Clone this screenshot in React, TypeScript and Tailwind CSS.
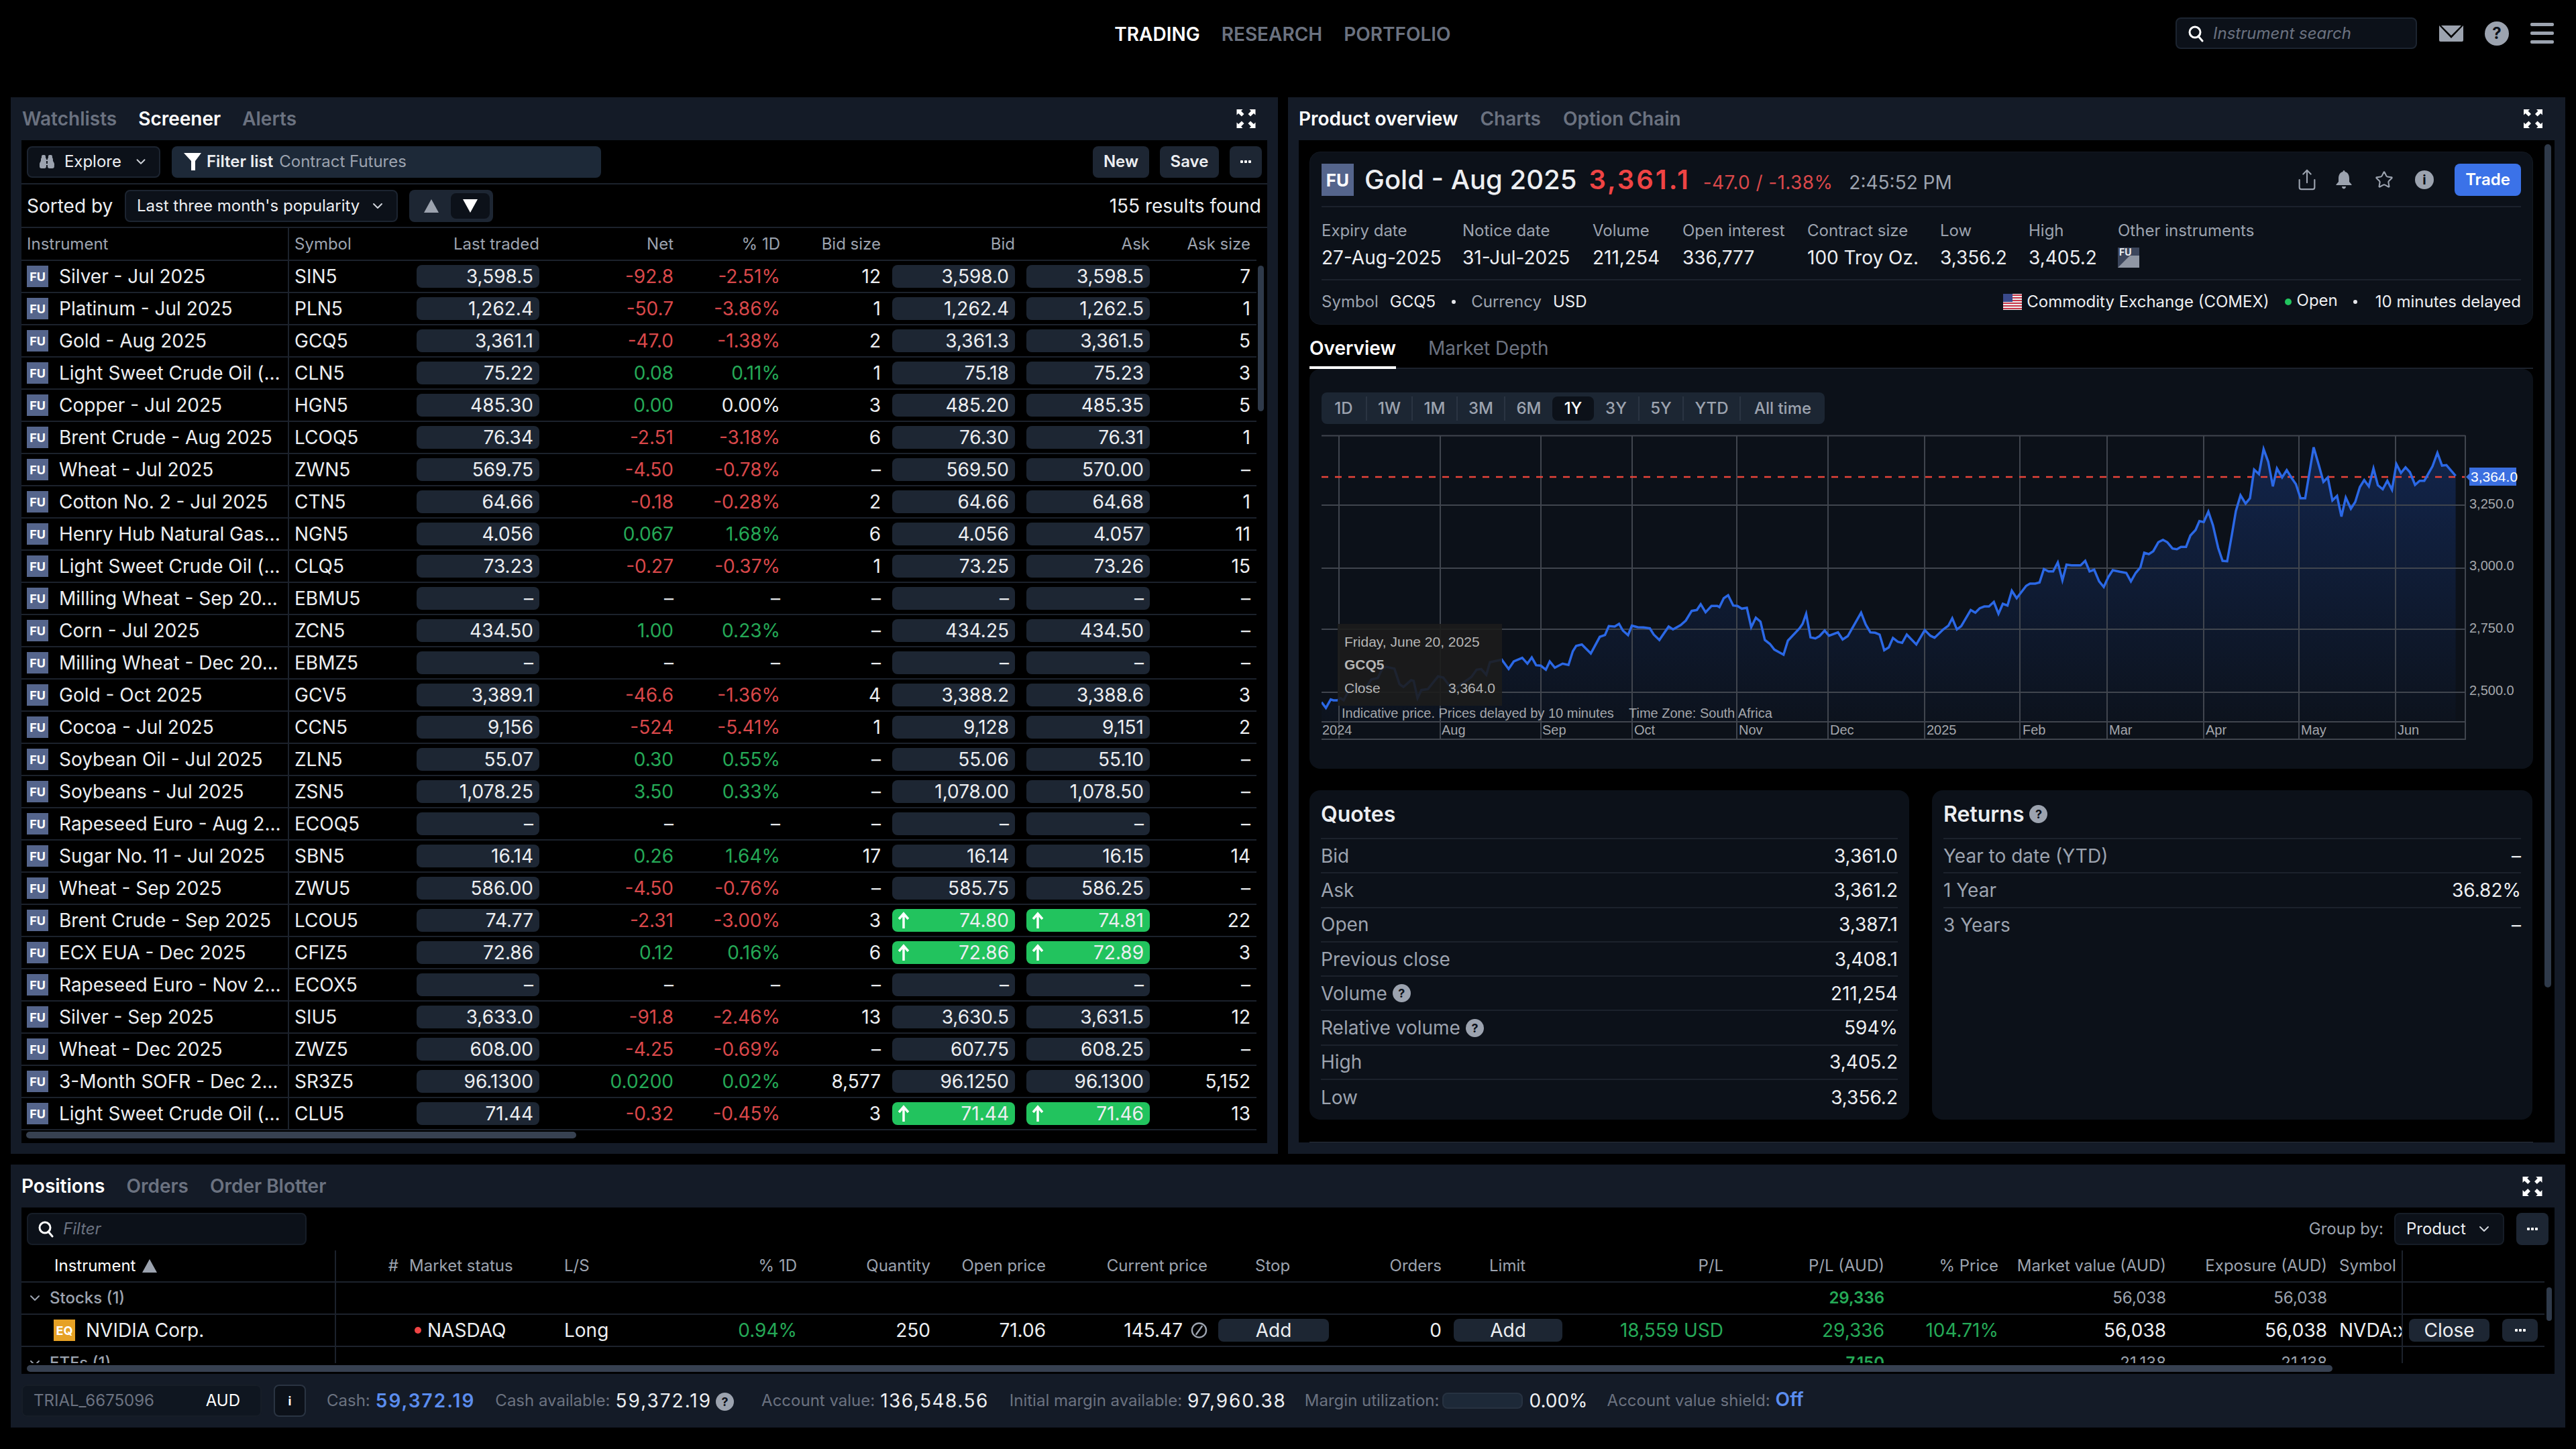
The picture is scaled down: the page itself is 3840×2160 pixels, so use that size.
import { Binoculars, ChevronDown, Share, Star } from "lucide-react";

type Row = [string, string, string, string, string, string, string, string, string, boolean?];

const rows: Row[] = [
  ["Silver - Jul 2025", "SIN5", "3,598.5", "-92.8", "-2.51%", "12", "3,598.0", "3,598.5", "7"],
  ["Platinum - Jul 2025", "PLN5", "1,262.4", "-50.7", "-3.86%", "1", "1,262.4", "1,262.5", "1"],
  ["Gold - Aug 2025", "GCQ5", "3,361.1", "-47.0", "-1.38%", "2", "3,361.3", "3,361.5", "5"],
  ["Light Sweet Crude Oil (...", "CLN5", "75.22", "0.08", "0.11%", "1", "75.18", "75.23", "3"],
  ["Copper - Jul 2025", "HGN5", "485.30", "0.00", "0.00%", "3", "485.20", "485.35", "5"],
  ["Brent Crude - Aug 2025", "LCOQ5", "76.34", "-2.51", "-3.18%", "6", "76.30", "76.31", "1"],
  ["Wheat - Jul 2025", "ZWN5", "569.75", "-4.50", "-0.78%", "–", "569.50", "570.00", "–"],
  ["Cotton No. 2 - Jul 2025", "CTN5", "64.66", "-0.18", "-0.28%", "2", "64.66", "64.68", "1"],
  ["Henry Hub Natural Gas...", "NGN5", "4.056", "0.067", "1.68%", "6", "4.056", "4.057", "11"],
  ["Light Sweet Crude Oil (...", "CLQ5", "73.23", "-0.27", "-0.37%", "1", "73.25", "73.26", "15"],
  ["Milling Wheat - Sep 20...", "EBMU5", "–", "–", "–", "–", "–", "–", "–"],
  ["Corn - Jul 2025", "ZCN5", "434.50", "1.00", "0.23%", "–", "434.25", "434.50", "–"],
  ["Milling Wheat - Dec 20...", "EBMZ5", "–", "–", "–", "–", "–", "–", "–"],
  ["Gold - Oct 2025", "GCV5", "3,389.1", "-46.6", "-1.36%", "4", "3,388.2", "3,388.6", "3"],
  ["Cocoa - Jul 2025", "CCN5", "9,156", "-524", "-5.41%", "1", "9,128", "9,151", "2"],
  ["Soybean Oil - Jul 2025", "ZLN5", "55.07", "0.30", "0.55%", "–", "55.06", "55.10", "–"],
  ["Soybeans - Jul 2025", "ZSN5", "1,078.25", "3.50", "0.33%", "–", "1,078.00", "1,078.50", "–"],
  ["Rapeseed Euro - Aug 2...", "ECOQ5", "–", "–", "–", "–", "–", "–", "–"],
  ["Sugar No. 11 - Jul 2025", "SBN5", "16.14", "0.26", "1.64%", "17", "16.14", "16.15", "14"],
  ["Wheat - Sep 2025", "ZWU5", "586.00", "-4.50", "-0.76%", "–", "585.75", "586.25", "–"],
  ["Brent Crude - Sep 2025", "LCOU5", "74.77", "-2.31", "-3.00%", "3", "74.80", "74.81", "22", true],
  ["ECX EUA - Dec 2025", "CFIZ5", "72.86", "0.12", "0.16%", "6", "72.86", "72.89", "3", true],
  ["Rapeseed Euro - Nov 2...", "ECOX5", "–", "–", "–", "–", "–", "–", "–"],
  ["Silver - Sep 2025", "SIU5", "3,633.0", "-91.8", "-2.46%", "13", "3,630.5", "3,631.5", "12"],
  ["Wheat - Dec 2025", "ZWZ5", "608.00", "-4.25", "-0.69%", "–", "607.75", "608.25", "–"],
  ["3-Month SOFR - Dec 2...", "SR3Z5", "96.1300", "0.0200", "0.02%", "8,577", "96.1250", "96.1300", "5,152"],
  ["Light Sweet Crude Oil (...", "CLU5", "71.44", "-0.32", "-0.45%", "3", "71.44", "71.46", "13", true],
];

const tone = (v: string) => {
  if (v === "–") return "text-[#e5e7eb]";
  return v.startsWith("-") ? "text-[#d9484a]" : "text-[#25a957]";
};

// chart line, read off the reference in three crops
const crop = (base: number, pts: number[][]) => pts.map(([x, y]) => [base + x / 2.613, 650 + y / 3]);
const line = [
  ...crop(1960, [[26,1190],[43,1216],[62,1178],[72,1182],[88,1182],[100,1172],[112,1182],[135,1130],[165,1118],[200,1125],[220,1088],[245,1082],[262,1042],[278,1032],[310,1040],[330,1110],[345,1122],[375,1092],[385,1095],[400,1172],[415,1136],[440,1132],[480,1075],[500,1080],[540,1140],[560,1118],[610,1078],[630,1045],[648,1042],[668,1068],[682,1012],[728,1000],[755,1042],[775,1008],[808,992],[828,1018],[845,990],[862,1025],[880,1027],[900,1045],[915,1008],[935,1036],[965,1018],[988,1024],[1005,962],[1018,938],[1040,932],[1075,972],[1110,898],[1130,890],[1145,850],[1168,852],[1185,840],[1200,870],[1220,890],[1235,848],[1258,855],[1280,856],[1305,860],[1320,888],[1342,912],[1378,852],[1395,865],[1425,845],[1445,825],[1468,782],[1488,778],[1503,752],[1522,788],[1545,760]]),
  ...crop(2560, [[0,760],[8,765],[25,725],[42,712],[62,758],[78,760],[95,772],[115,768],[132,855],[150,812],[168,830],[185,912],[205,930],[222,955],[258,978],[275,915],[320,860],[332,840],[346,795],[363,900],[382,905],[398,895],[418,870],[435,893],[470,878],[488,910],[508,895],[560,790],[578,843],[596,878],[615,880],[632,888],[650,958],[668,945],[684,903],[703,920],[720,925],[738,888],[775,932],[808,868],[830,893],[846,902],[880,865],[900,848],[915,815],[933,865],[950,850],[987,778],[1005,790],[1022,770],[1040,762],[1058,762],[1077,742],[1095,795],[1112,750],[1130,758],[1147,692],[1166,725],[1203,670],[1218,660],[1238,660],[1255,655],[1272,595],[1290,605],[1308,605],[1326,565],[1344,645],[1360,575],[1380,578],[1415,578],[1433,558],[1450,605],[1468,598],[1487,650],[1505,675],[1523,630],[1540,600]]),
  ...crop(3160, [[0,607],[25,612],[43,650],[62,612],[80,588],[95,522],[113,528],[130,515],[150,475],[168,464],[185,475],[205,503],[222,506],[238,496],[258,496],[275,445],[295,420],[310,380],[327,385],[345,338],[363,400],[383,500],[400,558],[418,560],[435,450],[452,335],[470,265],[490,302],[507,278],[523,150],[542,170],[560,58],[578,115],[596,225],[612,145],[632,185],[650,152],[668,185],[686,215],[704,278],[722,278],[755,50],[775,130],[793,205],[810,185],[828,288],[846,268],[863,360],[880,275],[900,325],[917,295],[935,228],[952,197],[970,225],[988,145],[1005,220],[1024,238],[1042,200],[1060,240],[1077,125],[1095,165],[1113,140],[1130,162],[1150,218],[1168,200],[1186,200],[1218,135],[1237,75],[1255,132],[1272,130],[1308,178]]),
];
const linePts = line.map(([x, y]) => `${x.toFixed(1)},${y.toFixed(1)}`).join(" ");
const areaPts = `1970,1076 ${linePts} 3660.6,1076`;

const vLines = [1996, 2147, 2297, 2433, 2589, 2725, 2869, 3011, 3141, 3285, 3427, 3571];
const hLines = [753, 847, 938, 1032];
const months: [string, number][] = [["2024", 1971], ["Aug", 2149], ["Sep", 2299], ["Oct", 2436], ["Nov", 2592], ["Dec", 2728], ["2025", 2872], ["Feb", 3015], ["Mar", 3144], ["Apr", 3288], ["May", 3430], ["Jun", 3574]];
const prices: [string, number][] = [["3,250.0", 758], ["3,000.0", 850], ["2,750.0", 943], ["2,500.0", 1036]];

const ranges = [
  ["1D", "w-[68px]"], ["1W", "w-[68px]"], ["1M", "w-[67px]"], ["3M", "w-[71px]"], ["6M", "w-[70px]"],
  ["1Y", "w-[62px]"], ["3Y", "w-[68px]"], ["5Y", "w-[66px]"], ["YTD", "w-[85px]"], ["All time", "w-[125px]"],
];

const stats = [
  ["Expiry date", "27-Aug-2025", "w-[210px]"],
  ["Notice date", "31-Jul-2025", "w-[194px]"],
  ["Volume", "211,254", "w-[134px]"],
  ["Open interest", "336,777", "w-[186px]"],
  ["Contract size", "100 Troy Oz.", "w-[198px]"],
  ["Low", "3,356.2", "w-[132px]"],
  ["High", "3,405.2", "w-[133px]"],
];

const quotes: [string, string, boolean?][] = [
  ["Bid", "3,361.0"], ["Ask", "3,361.2"], ["Open", "3,387.1"], ["Previous close", "3,408.1"],
  ["Volume", "211,254", true], ["Relative volume", "594%", true], ["High", "3,405.2"], ["Low", "3,356.2"],
];

function Expand({ className }: { className: string }) {
  return (
    <svg viewBox="0 0 28 28" className={className} fill="#fff">
      <path d="M0 0h9L6.6 2.4 11 7l-3.6 3.6L2.6 6 0 8.6zM28 0h-9l2.4 2.4L17 7l3.6 3.6L25.4 6 28 8.6zM0 28h9l-2.4-2.4L11 21l-3.6-3.6L2.6 22 0 19.4zM28 28h-9l2.4-2.4L17 21l3.6-3.6L25.4 22 28 19.4z" />
    </svg>
  );
}

function SearchGlyph({ className }: { className: string }) {
  return (
    <svg viewBox="0 0 24 24" className={className} fill="none" stroke="#fff" strokeWidth="3">
      <circle cx="11" cy="10" r="8" />
      <path d="M16 16l6 7" strokeLinecap="round" />
    </svg>
  );
}

function Dots() {
  return (
    <svg viewBox="0 0 16 4" className="w-[16px] h-[4px]" fill="#fff">
      <rect width="4" height="4" rx="1" /><rect x="6" width="4" height="4" rx="1" /><rect x="12" width="4" height="4" rx="1" />
    </svg>
  );
}

function Help({ big }: { big?: boolean }) {
  return (
    <span className={`inline-flex items-center justify-center rounded-full bg-[#9ca3af] text-[#0c1119] font-bold shrink-0 ${big ? "w-[36px] h-[36px] text-[24px]" : "w-[27px] h-[27px] text-[18px]"}`}>?</span>
  );
}

function Badge({ kind }: { kind: "FU" | "EQ" }) {
  return (
    <span className={`w-[32px] h-[32px] shrink-0 flex items-center justify-center text-[18px] font-bold text-white ${kind === "FU" ? "bg-[#55658c]" : "bg-[#e6a125]"}`}>{kind}</span>
  );
}

function Pill({ value, up }: { value: string; up?: boolean }) {
  return (
    <div className={`h-[34px] w-full rounded-[8px] flex items-center justify-between pl-[8px] pr-[9px] ${up ? "bg-[#22c35e]" : "bg-[#1d2633]"}`}>
      {up ? (
        <svg viewBox="0 0 18 26" className="w-[18px] h-[26px]" fill="none" stroke="#fff" strokeWidth="3.5">
          <path d="M9 25V3M2 11l7-8 7 8" />
        </svg>
      ) : <span />}
      <span>{value}</span>
    </div>
  );
}

function Screener() {
  return (
    <div className="w-[1889px] bg-[#141b27] flex flex-col">
      <div className="h-[64px] shrink-0 flex items-center justify-between pl-[17px] pr-[33px] text-[28px] font-semibold text-[#6b7280]">
        <div className="flex gap-[32px]">
          <span>Watchlists</span>
          <span className="text-white">Screener</span>
          <span>Alerts</span>
        </div>
        <Expand className="w-[29px] h-[28px]" />
      </div>
      <div className="relative flex-1 mx-[16px] mb-[16px] bg-black flex flex-col min-h-0">
        <div className="h-[66px] shrink-0 px-[8px] border-b-2 border-[#1c222c] flex items-center justify-between text-[24px]">
          <div className="flex gap-[17px]">
            <div className="w-[199px] h-[47px] rounded-[8px] bg-[#0c1119] border-2 border-[#1c2430] flex items-center px-[16px] gap-[14px]">
              <Binoculars className="w-[26px] h-[26px] text-[#9ca3af]" fill="currentColor" />
              <span>Explore</span>
              <ChevronDown className="w-[24px] h-[24px] ml-[4px] text-[#d1d5db]" />
            </div>
            <div className="w-[640px] h-[47px] rounded-[8px] bg-[#1d2938] flex items-center px-[18px]">
              <svg viewBox="0 0 26 28" className="w-[26px] h-[28px]" fill="#fff"><path d="M0 1h26L17 13v14l-6 0V13z" /></svg>
              <span className="font-semibold ml-[8px]">Filter list</span>
              <span className="ml-[9px] text-[#9ca3af]">Contract Futures</span>
            </div>
          </div>
          <div className="flex gap-[16px] font-semibold">
            <div className="w-[84px] h-[47px] rounded-[8px] bg-[#1d2633] flex items-center justify-center">New</div>
            <div className="w-[88px] h-[47px] rounded-[8px] bg-[#1d2633] flex items-center justify-center">Save</div>
            <div className="w-[48px] h-[47px] rounded-[8px] bg-[#1d2633] flex items-center justify-center"><Dots /></div>
          </div>
        </div>
        <div className="h-[65px] shrink-0 px-[8px] border-b-2 border-[#1c222c] flex items-center text-[28px]">
          <span className="w-[146px]">Sorted by</span>
          <div className="w-[407px] h-[48px] rounded-[8px] bg-[#0c1119] border-2 border-[#1c2430] flex items-center justify-between px-[16px] text-[24px]">
            <span>Last three month's popularity</span>
            <ChevronDown className="w-[24px] h-[24px] text-[#d1d5db]" />
          </div>
          <div className="ml-[17px] w-[125px] h-[48px] rounded-[8px] bg-[#1d2633] flex items-center justify-between pl-[22px] pr-[5px]">
            <svg viewBox="0 0 22 20" className="w-[22px] h-[20px]" fill="#9ca3af"><path d="M11 0l11 20H0z" /></svg>
            <span className="w-[58px] h-[38px] rounded-[8px] bg-[#0c1119] flex items-center justify-center">
              <svg viewBox="0 0 22 20" className="w-[22px] h-[20px]" fill="#fff"><path d="M11 20L22 0H0z" /></svg>
            </span>
          </div>
          <span className="ml-auto pr-[1px]">155 results found</span>
        </div>
        <div className="flex-1 min-h-0 overflow-hidden text-[28px] pr-[16px]">
          <div className="h-[49px] grid grid-cols-[399px_190px_183px_200px_159px_150px_200px_201px_158px] items-center border-b-2 border-[#1c222c] text-[24px] text-[#9ca3af] text-right">
            <div className="h-full flex items-center pl-[8px] border-r-2 border-[#1c222c]">Instrument</div>
            <div className="pl-[8px] text-left">Symbol</div>
            <div>Last traded</div>
            <div>Net</div>
            <div>% 1D</div>
            <div>Bid size</div>
            <div>Bid</div>
            <div>Ask</div>
            <div className="pr-[8px]">Ask size</div>
          </div>
          {rows.map((r) => (
            <div key={r[1]} className="h-[48px] grid grid-cols-[399px_190px_183px_200px_159px_150px_200px_201px_158px] items-center border-b-2 border-[#1c222c] text-right text-[#eceef1]">
              <div className="h-full flex items-center gap-[16px] pl-[8px] border-r-2 border-[#1c222c] whitespace-nowrap">
                <Badge kind="FU" />
                <span>{r[0]}</span>
              </div>
              <div className="pl-[8px] text-left">{r[1]}</div>
              <Pill value={r[2]} />
              <div className={tone(r[3])}>{r[3]}</div>
              <div className={r[4] === "0.00%" ? "" : tone(r[4])}>{r[4]}</div>
              <div>{r[5]}</div>
              <div className="pl-[17px]"><Pill value={r[6]} up={r[9]} /></div>
              <div className="pl-[17px]"><Pill value={r[7]} up={r[9]} /></div>
              <div className="pr-[8px]">{r[8]}</div>
            </div>
          ))}
        </div>
        <div className="h-[17px] shrink-0 pl-[7px]">
          <div className="w-[820px] h-[10px] rounded-full bg-[#374151]" />
        </div>
        <div className="absolute left-[1843px] top-[187px] w-[9px] h-[217px] rounded-full bg-[#2f3a4a]" />
      </div>
    </div>
  );
}

function Chart() {
  return (
    <div className="relative mt-[16px] w-[1790px] h-[456px]">
      <svg viewBox="1970 648 1790 456" className="w-[1790px] h-[456px]">
        <defs>
          <linearGradient id="area" gradientUnits="userSpaceOnUse" x1="0" y1="660" x2="0" y2="1076">
            <stop offset="0" stopColor="#2563eb" stopOpacity="0.24" />
            <stop offset="1" stopColor="#2563eb" stopOpacity="0.02" />
          </linearGradient>
        </defs>
        <polygon points={areaPts} fill="url(#area)" />
        <g stroke="#40454e" strokeWidth="2">
          <path d="M1970 649.5H3675M1970 1076H3675M1970 1102H3675M3675 649V1103" fill="none" />
          {hLines.map((y) => <path key={y} d={`M1970 ${y}H3675`} />)}
          {vLines.map((x) => <path key={x} d={`M${x} 649V1102`} />)}
        </g>
        <path d="M1970 711H3674" stroke="#e8443a" strokeWidth="2.5" strokeDasharray="10 10" />
        <polyline points={linePts} fill="none" stroke="#2b68e6" strokeWidth="3.5" />
        <g fontSize="20" fill="#a3a6ab" fontFamily="'Liberation Sans', sans-serif">
          {months.map(([t, x]) => <text key={t} x={x} y="1095">{t}</text>)}
          {prices.map(([t, y]) => <text key={t} x="3681" y={y}>{t}</text>)}
          <text x="2000" y="1070">Indicative price. Prices delayed by 10 minutes</text>
          <text x="2428" y="1070">Time Zone: South Africa</text>
        </g>
        <path d="M3676 711l6-6v12z" fill="#3b6fe0" />
        <rect x="3681" y="697" width="70" height="27" fill="#3b6fe0" />
        <text x="3683" y="718" fontSize="21" fill="#fff" fontFamily="'Liberation Sans', sans-serif">3,364.0</text>
      </svg>
      <div className="absolute left-[24px] top-[282px] w-[245px] h-[122px] bg-[#1c1c1c]/90 px-[10px] text-[21px] text-[#b5b5b5] font-['Liberation_Sans',sans-serif] flex flex-col justify-between py-[11px]">
        <div>Friday, June 20, 2025</div>
        <div className="font-bold">GCQ5</div>
        <div className="flex justify-between"><span>Close</span><span>3,364.0</span></div>
      </div>
    </div>
  );
}

function Overview() {
  return (
    <div className="w-[1904px] bg-[#141b27] flex flex-col">
      <div className="h-[64px] shrink-0 flex items-center justify-between pl-[16px] pr-[34px] text-[28px] font-semibold text-[#6b7280]">
        <div className="flex gap-[33px]">
          <span className="text-white">Product overview</span>
          <span>Charts</span>
          <span>Option Chain</span>
        </div>
        <Expand className="w-[28px] h-[28px]" />
      </div>
      <div className="relative flex-1 mx-[16px] mb-[17px] bg-black pl-[16px] pr-[32px] pt-[17px] min-h-0 overflow-hidden">
        <div className="h-[258px] rounded-[16px] bg-[#0c1119] px-[17px] pt-[17px] border border-[#131922]">
          <div className="h-[65px] flex items-start border-b-2 border-[#1c222c]">
            <span className="w-[48px] h-[48px] bg-[#55658c] flex items-center justify-center text-[26px] font-bold text-white shrink-0">FU</span>
            <span className="ml-[16px] text-[40px] leading-[48px] font-medium">Gold - Aug 2025</span>
            <span className="ml-[18px] text-[40px] leading-[48px] font-semibold tracking-[3px] text-[#ef4444]">3,361.1</span>
            <span className="ml-[19px] mt-[4px] text-[28px] leading-[48px] tracking-[0.4px] text-[#d9484a]">-47.0 / -1.38%</span>
            <span className="ml-[24px] mt-[4px] text-[28px] leading-[48px] text-[#9ca3af]">2:45:52 PM</span>
            <div className="ml-auto flex items-center h-[48px]">
              <Share className="w-[34px] h-[34px] text-[#9ca3af]" strokeWidth={1.5} />
              <svg viewBox="0 0 24 28" className="ml-[26px] w-[24px] h-[28px]" fill="#9ca3af"><path d="M12 0c1 0 1.500.8 1.500 2C18 3 20 7 20 12v5l3.500 4v1H.500v-1L4 17v-5c0-5 2-9 6.500-10C10.500.8 11 0 12 0zM9 24h6c0 2-1.500 3.500-3 3.500S9 26 9 24z" /></svg>
              <Star className="ml-[34px] w-[28px] h-[28px] text-[#9ca3af]" strokeWidth={1.8} />
              <span className="ml-[32px] w-[28px] h-[28px] rounded-full bg-[#9ca3af] text-[#0c1119] flex items-center justify-center text-[20px] font-bold">i</span>
              <span className="ml-[31px] w-[99px] h-[48px] rounded-[8px] bg-[#3b72e8] flex items-center justify-center text-[24px] font-semibold text-white">Trade</span>
            </div>
          </div>
          <div className="h-[109px] flex pt-[19px] border-b-2 border-[#1c222c]">
            {stats.map(([l, v, w]) => (
              <div key={l} className={w}>
                <div className="text-[24px] leading-[32px] text-[#9ca3af]">{l}</div>
                <div className="mt-[7px] text-[28px] leading-[34px]">{v}</div>
              </div>
            ))}
            <div>
              <div className="text-[24px] leading-[32px] text-[#9ca3af]">Other instruments</div>
              <div className="mt-[9px] w-[32px] h-[30px] bg-[#3c465c] relative overflow-hidden text-[14px] font-bold leading-[14px] pl-[2px]">
                FU
                <svg viewBox="0 0 32 30" className="absolute inset-0" fill="#8f96a3"><path d="M0 30L18 12h14v18z" /></svg>
              </div>
            </div>
          </div>
          <div className="h-[64px] flex items-center text-[24px]">
            <span className="text-[#9ca3af]">Symbol</span>
            <span className="ml-[17px]">GCQ5</span>
            <span className="ml-[24px] w-[6px] h-[6px] rounded-full bg-[#e5e7eb]" />
            <span className="ml-[23px] text-[#9ca3af]">Currency</span>
            <span className="ml-[17px]">USD</span>
            <svg viewBox="0 0 28 24" className="ml-auto w-[28px] h-[24px]">
              <rect width="28" height="24" fill="#eee" />
              <path d="M0 2h28M0 6h28M0 10h28M0 14h28M0 18h28M0 22h28" stroke="#c8374a" strokeWidth="2" />
              <rect width="14" height="12" fill="#3a4a8c" />
            </svg>
            <span className="ml-[7px]">Commodity Exchange (COMEX)</span>
            <span className="ml-[23px] w-[10px] h-[10px] rounded-full bg-[#22c55e]" />
            <span className="ml-[8px] -mt-[4px]">Open</span>
            <span className="ml-[23px] w-[6px] h-[6px] rounded-full bg-[#e5e7eb]" />
            <span className="ml-[27px]">10 minutes delayed</span>
          </div>
        </div>
        <div className="h-[66px] flex gap-[48px] items-start pt-[14px] text-[28px] border-b-2 border-[#1c222c] text-[#6b7280]">
          <span className="h-[52px] font-semibold text-white border-b-4 border-white">Overview</span>
          <span>Market Depth</span>
        </div>
        <div className="h-[596px] rounded-[16px] bg-[#0c1119] px-[18px] pt-[35px]">
          <div className="w-[750px] h-[47px] rounded-[8px] bg-[#1c2633] flex items-center text-[24px] font-medium text-[#9ca3af]">
            {ranges.map(([t, w], i) => (
              <span key={t} className={`${w} h-[36px] flex items-center justify-center ${t === "1Y" ? "bg-[#0c1119] rounded-[8px] text-white" : i < 9 && t !== "6M" ? "border-r-2 border-[#2a3442]" : ""}`}>{t}</span>
            ))}
          </div>
          <Chart />
        </div>
        <div className="mt-[32px] flex gap-[34px]">
          <div className="w-[894px] h-[491px] rounded-[16px] bg-[#0c1119] px-[17px]">
            <div className="h-[73px] flex items-center text-[32px] font-semibold border-b-2 border-[#1c222c]">Quotes</div>
            {quotes.map(([l, v, h], i) => (
              <div key={l} className={`h-[51.3px] flex items-center justify-between text-[28px] ${i < 7 ? "border-b-2 border-[#1c222c]" : ""}`}>
                <span className="flex items-center gap-[8px] text-[#9ca3af]">{l}{h && <Help />}</span>
                <span>{v}</span>
              </div>
            ))}
          </div>
          <div className="w-[895px] h-[491px] rounded-[16px] bg-[#0c1119] px-[17px]">
            <div className="h-[73px] flex items-center gap-[8px] text-[32px] font-semibold border-b-2 border-[#1c222c]">Returns <Help /></div>
            {[["Year to date (YTD)", "–"], ["1 Year", "36.82%"], ["3 Years", "–"]].map(([l, v], i) => (
              <div key={l} className={`h-[51.3px] flex items-center justify-between text-[28px] ${i < 2 ? "border-b-2 border-[#1c222c]" : ""}`}>
                <span className="text-[#9ca3af]">{l}</span>
                <span>{v}</span>
              </div>
            ))}
          </div>
        </div>
        <div className="mt-[33px] h-[2px] bg-[#2a303a]" />
        <div className="absolute left-[1857px] top-[6px] w-[10px] h-[1257px] rounded-full bg-[#2f3a4a]" />
      </div>
    </div>
  );
}

const posCols = "grid-cols-[469px_101px_231px_167px_188px_199px_172px_241px_181px_168px_180px_240px_240px_170px_250px_240px_111px_213px]";

function Positions() {
  return (
    <div className="mt-[16px] ml-[16px] w-[3808px] h-[392px] bg-[#141b27] flex flex-col">
      <div className="h-[64px] shrink-0 flex items-center justify-between pl-[16px] pr-[34px] text-[28px] font-semibold text-[#6b7280]">
        <div className="flex gap-[32px]">
          <span className="text-white">Positions</span>
          <span>Orders</span>
          <span>Order Blotter</span>
        </div>
        <Expand className="w-[30px] h-[29px]" />
      </div>
      <div className="relative mx-[16px] h-[248px] bg-black flex flex-col">
        <div className="h-[64px] shrink-0 flex items-center justify-between pl-[8px] pr-[9px] text-[24px]">
          <div className="w-[417px] h-[48px] rounded-[8px] bg-[#0c1119] border-2 border-[#161d27] flex items-center px-[14px] gap-[14px]">
            <SearchGlyph className="w-[24px] h-[26px]" />
            <span className="italic text-[#6b7280]">Filter</span>
          </div>
          <div className="flex items-center">
            <span className="text-[#9ca3af]">Group by:</span>
            <div className="ml-[16px] w-[164px] h-[48px] rounded-[8px] bg-[#0c1119] border-2 border-[#161d27] flex items-center justify-between px-[16px]">
              <span>Product</span>
              <ChevronDown className="w-[24px] h-[24px] text-[#d1d5db]" />
            </div>
            <div className="ml-[18px] w-[48px] h-[48px] rounded-[8px] bg-[#1d2633] flex items-center justify-center"><Dots /></div>
          </div>
        </div>
        <div className="h-[168px] overflow-hidden w-[3761px]">
          <div className={`h-[48px] grid ${posCols} items-center border-b-2 border-[#1c222c] text-[24px] text-[#9ca3af] text-right`}>
            <div className="h-full flex items-center gap-[10px] pl-[49px] text-white border-r-2 border-[#1c222c]">
              Instrument
              <svg viewBox="0 0 22 20" className="w-[22px] h-[20px]" fill="#9ca3af"><path d="M11 0l11 20H0z" /></svg>
            </div>
            <div className="pr-[8px]">#</div>
            <div className="pl-[8px] text-left">Market status</div>
            <div className="pl-[8px] text-left">L/S</div>
            <div>% 1D</div>
            <div>Quantity</div>
            <div>Open price</div>
            <div>Current price</div>
            <div className="pl-[71px] text-left">Stop</div>
            <div>Orders</div>
            <div className="pl-[71px] text-left">Limit</div>
            <div>P/L</div>
            <div>P/L (AUD)</div>
            <div>% Price</div>
            <div>Market value (AUD)</div>
            <div>Exposure (AUD)</div>
            <div className="pl-[18px] text-left">Symbol</div>
            <div className="h-full border-l-2 border-[#1c222c]" />
          </div>
          <div className={`h-[48px] grid ${posCols} items-center border-b-2 border-[#1c222c] text-[24px] text-right`}>
            <div className="h-full flex items-center gap-[10px] pl-[8px] text-[#9ca3af] border-r-2 border-[#1c222c]">
              <ChevronDown className="w-[24px] h-[24px]" />
              <span className="font-medium">Stocks (1)</span>
            </div>
            <div className="col-start-2 col-end-13" />
            <div className="font-semibold text-[#25a957]">29,336</div>
            <div />
            <div className="text-[#9ca3af]">56,038</div>
            <div className="text-[#9ca3af]">56,038</div>
            <div />
            <div className="h-full border-l-2 border-[#1c222c]" />
          </div>
          <div className={`h-[48px] grid ${posCols} items-center border-b-2 border-[#1c222c] text-[28px] text-right text-[#eceef1]`}>
            <div className="h-full flex items-center gap-[16px] pl-[48px] border-r-2 border-[#1c222c]">
              <Badge kind="EQ" />
              <span>NVIDIA Corp.</span>
            </div>
            <div />
            <div className="pl-[16px] flex items-center gap-[9px]"><span className="w-[10px] h-[10px] rounded-full bg-[#ef4444]" />NASDAQ</div>
            <div className="pl-[8px] text-left">Long</div>
            <div className="text-[#25a957]">0.94%</div>
            <div>250</div>
            <div>71.06</div>
            <div className="flex items-center justify-end gap-[12px]">
              145.47
              <svg viewBox="0 0 26 26" className="w-[25px] h-[26px]" fill="none" stroke="#9ca3af" strokeWidth="2.5"><circle cx="13" cy="13" r="11" /><path d="M18 6L8 20" /></svg>
            </div>
            <div className="pl-[16px]"><div className="h-[34px] rounded-[8px] bg-[#1d2633] flex items-center justify-center">Add</div></div>
            <div>0</div>
            <div className="pl-[18px]"><div className="h-[34px] rounded-[8px] bg-[#1d2633] flex items-center justify-center">Add</div></div>
            <div className="text-[#25a957]">18,559 USD</div>
            <div className="text-[#25a957]">29,336</div>
            <div className="text-[#25a957]">104.71%</div>
            <div>56,038</div>
            <div>56,038</div>
            <div className="pl-[18px] text-left overflow-hidden whitespace-nowrap">NVDA:xnas</div>
            <div className="h-full border-l-2 border-[#1c222c] flex items-center pl-[9px]">
              <div className="w-[120px] h-[34px] rounded-[8px] bg-[#1d2633] flex items-center justify-center">Close</div>
              <div className="ml-[19px] w-[53px] h-[34px] rounded-[8px] bg-[#1d2633] flex items-center justify-center"><Dots /></div>
            </div>
          </div>
          <div className={`h-[48px] grid ${posCols} items-center text-[24px] text-right`}>
            <div className="h-full flex items-center gap-[10px] pl-[8px] text-[#9ca3af] border-r-2 border-[#1c222c]">
              <ChevronDown className="w-[24px] h-[24px]" />
              <span className="font-medium">ETFs (1)</span>
            </div>
            <div className="col-start-2 col-end-13" />
            <div className="font-semibold text-[#25a957]">7,150</div>
            <div />
            <div className="text-[#9ca3af]">21,138</div>
            <div className="text-[#9ca3af]">21,138</div>
            <div />
            <div className="h-full border-l-2 border-[#1c222c]" />
          </div>
        </div>
        <div className="absolute left-[8px] top-[235px] w-[3437px] h-[10px] rounded-full bg-[#374151]" />
        <div className="absolute left-[3764px] top-[119px] w-[8px] h-[50px] rounded-full bg-[#2f3a4a]" />
      </div>
      <div className="flex-1 flex items-center pl-[16px] text-[24px] text-[#6b7280]">
        <div className="w-[358px] h-[48px] rounded-[8px] bg-[#0f1620] border-2 border-[#161d27] flex items-center justify-between pl-[16px] pr-[30px]">
          <span>TRIAL_6675096</span>
          <span className="text-white">AUD</span>
        </div>
        <div className="ml-[18px] w-[48px] h-[48px] rounded-[8px] bg-[#0c1119] border-2 border-[#2a3442] flex items-center justify-center text-white text-[18px] font-bold">i</div>
        <span className="ml-[31px]">Cash:</span>
        <span className="ml-[8px] text-[28px] font-semibold tracking-[2px] text-[#5b8def]">59,372.19</span>
        <span className="ml-[30px]">Cash available:</span>
        <span className="ml-[8px] text-[28px] tracking-[2px] text-[#eceef1]">59,372.19</span>
        <span className="ml-[6px]"><Help /></span>
        <span className="ml-[41px]">Account value:</span>
        <span className="ml-[8px] text-[28px] tracking-[1.5px] text-[#eceef1]">136,548.56</span>
        <span className="ml-[31px]">Initial margin available:</span>
        <span className="ml-[8px] text-[28px] tracking-[1.9px] text-[#eceef1]">97,960.38</span>
        <span className="ml-[27px]">Margin utilization:</span>
        <span className="w-[120px] h-[24px] rounded-[8px] bg-[#1d2938] border-2 border-[#273241] ml-[5px]" />
        <span className="ml-[9px] text-[28px] text-[#eceef1]">0.00%</span>
        <span className="ml-[29px]">Account value shield:</span>
        <span className="ml-[8px] text-[28px] font-semibold text-[#5b8def] -mt-[4px]">Off</span>
      </div>
    </div>
  );
}

export default function App() {
  return (
    <div className="w-[3840px] h-[2160px] bg-black text-[#eceef1] font-['Inter',sans-serif] overflow-hidden">
      <div className="relative h-[145px]">
        <div className="h-[102px] flex items-center justify-center gap-[32px] text-[28px] font-semibold uppercase text-[#6b7280] pr-[16px]">
          <span className="text-white">Trading</span>
          <span>Research</span>
          <span>Portfolio</span>
        </div>
        <div className="absolute right-[33px] top-[26px] flex items-center">
          <div className="w-[360px] h-[47px] rounded-[8px] bg-[#0c1119] border-2 border-[#1c2430] flex items-center px-[16px] gap-[14px] text-[24px] italic text-[#6b7280]">
            <SearchGlyph className="w-[24px] h-[26px]" />
            <span>Instrument search</span>
          </div>
          <svg viewBox="0 0 36 24" className="ml-[33px] w-[36px] h-[24px]" fill="#9ca3af">
            <path d="M0 0l18 19L36 0v22a2 2 0 0 1-2 2H2a2 2 0 0 1-2-2zM3 0h30L18 15z" />
          </svg>
          <span className="ml-[32px]"><Help big /></span>
          <div className="ml-[32px] w-[35px] flex flex-col gap-[8px]">
            <span className="h-[5px] rounded-[2px] bg-[#9ca3af]" />
            <span className="h-[5px] rounded-[2px] bg-[#9ca3af]" />
            <span className="h-[5px] rounded-[2px] bg-[#9ca3af]" />
          </div>
        </div>
      </div>
      <div className="h-[1575px] flex gap-[15px] pl-[16px]">
        <Screener />
        <Overview />
      </div>
      <Positions />
    </div>
  );
}
